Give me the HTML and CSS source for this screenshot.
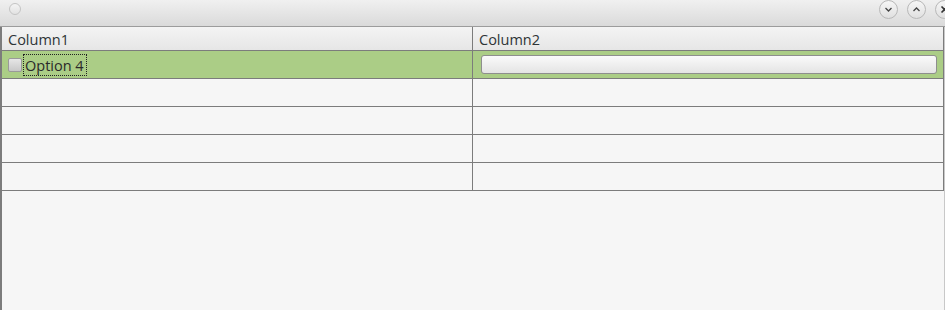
FILE: index.html
```html
<!DOCTYPE html>
<html lang="en">
<head>
  <meta charset="UTF-8">
  <title>Table</title>
  <link rel="stylesheet" href="styles.css">
</head>
<body>
  <div class="window">
    <div class="titlebar">
      <span class="dot"></span>
      <div class="controls">
        <span class="ctl">
          <svg width="17" height="17" viewBox="0 0 17 17"><path d="M5.5 7 L8.5 10 L11.5 7" fill="none" stroke="#444" stroke-width="1.3"/></svg>
        </span>
        <span class="ctl">
          <svg width="17" height="17" viewBox="0 0 17 17"><path d="M5.5 10 L8.5 7 L11.5 10" fill="none" stroke="#444" stroke-width="1.3"/></svg>
        </span>
        <span class="ctl">
          <svg width="17" height="17" viewBox="0 0 17 17"><path d="M5.5 5.5 L11.5 11.5 M11.5 5.5 L5.5 11.5" fill="none" stroke="#333" stroke-width="1.6"/></svg>
        </span>
      </div>
    </div>

    <div class="body">
      <div class="grid">
        <div class="cell head">Column1</div>
        <div class="cell head">Column2</div>

        <div class="cell sel">
          <span class="check"></span>
          <span class="focus">Option 4</span>
        </div>
        <div class="cell sel">
          <span class="btn"></span>
        </div>

        <div class="cell"></div><div class="cell"></div>
        <div class="cell"></div><div class="cell"></div>
        <div class="cell"></div><div class="cell"></div>
        <div class="cell"></div><div class="cell"></div>
      </div>
    </div>
  </div>
</body>
</html>
```

FILE: styles.css
```css
body {
  margin: 0;
  background: #f6f6f6;
  font-family: "Open Sans", "DejaVu Sans", sans-serif;
  font-size: 14.5px;
  color: #2e3436;
}
.window {
  width: 945px;
  height: 310px;
  overflow: hidden;
}
.titlebar {
  height: 26px;
  border-bottom: 1px solid #9c9c9c;
  background: linear-gradient(#f0f0f0, #dadada);
  display: flex;
  align-items: center;
  justify-content: space-between;
  padding-left: 9px;
}
.dot {
  width: 10px;
  height: 10px;
  border-radius: 50%;
  border: 1px solid #c4c4c4;
  background: linear-gradient(#f4f4f4, #e2e2e2);
  margin-top: -8px;
}
.controls {
  display: flex;
  gap: 9px;
  margin-right: -9px;
  margin-top: -7px;
}
.ctl {
  width: 17px;
  height: 17px;
  border-radius: 50%;
  border: 1px solid #b8b8b8;
  background: linear-gradient(#f6f6f6, #e0e0e0);
  display: flex;
}
.body {
  height: 283px;
  border-left: 2px solid #7c7c7c;
  border-right: 1px solid #c8c8c8;
  box-sizing: border-box;
}
.grid {
  display: grid;
  grid-template-columns: 471px 470px;
  grid-template-rows: 24px repeat(5, 28px);
  border-right: 1px solid #7c7c7c;
  width: 941px;
}
.cell {
  border-bottom: 1px solid #7c7c7c;
  display: flex;
  align-items: center;
}
.cell:nth-child(odd) {
  border-right: 1px solid #7c7c7c;
}
.head {
  background: linear-gradient(#f4f4f4, #e6e6e6);
  padding-left: 6px;
  padding-top: 2px;
}
.sel {
  background: #abcd86;
}
.check {
  width: 12px;
  height: 12px;
  border: 1px solid #9a9a9a;
  border-radius: 2px;
  background: linear-gradient(#e6e6e6, #c8c8c8);
  margin-left: 6px;
}
.focus {
  border: 1px dotted #222;
  padding: 1px 2px 0 1px;
  line-height: 19px;
  margin-left: 1px;
  color: #2a2a2a;
}
.btn {
  flex: 1;
  height: 17px;
  margin: 0 6px 0 8px;
  border: 1px solid #8e8e8e;
  border-radius: 3px;
  background: linear-gradient(#fafafa, #e4e4e4);
}
```
